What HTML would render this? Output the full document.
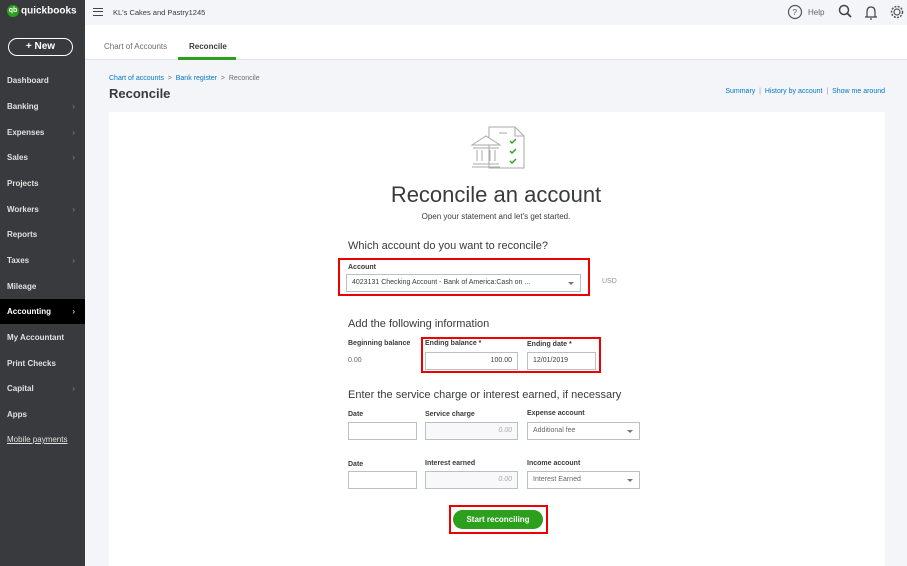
<!DOCTYPE html>
<html><head><meta charset="utf-8"><style>
*{box-sizing:border-box;margin:0;padding:0}
html,body{width:907px;height:566px;overflow:hidden}
body{font-family:"Liberation Sans",sans-serif;background:#f4f5f8;position:relative;color:#393a3d}
.sb{position:absolute;left:0;top:0;width:85px;height:566px;background:#393a3d;color:#fff}
.logo{position:absolute;left:7px;top:5px;font-weight:bold;font-size:10px;color:#fff}
.logo .c{display:inline-block;width:12px;height:12px;border-radius:50%;background:#2ca01c;vertical-align:middle;margin-right:2px;font-size:7px;text-align:center;line-height:12px}
.new{position:absolute;left:8px;top:38px;width:65px;height:18px;border:1.5px solid #fff;border-radius:10px;font-size:10px;font-weight:bold;text-align:center;line-height:15px}
.nav{position:absolute;left:0;width:85px;height:25px;font-size:8px;font-weight:bold;padding-left:7px;line-height:25px;color:#e0e0e0}
.nav .a{position:absolute;right:10px;color:#888;font-weight:normal}
.top{position:absolute;left:85px;top:0;right:0;height:25px;background:#f4f5f8;font-size:7.5px}
.tabs{position:absolute;left:85px;top:25px;right:0;height:35px;background:#fff;border-bottom:1px solid #e3e5e8}
.tab{position:absolute;top:17px;font-size:8px;color:#6b6c72}
.link{color:#0077c5}
.card{position:absolute;left:109px;top:112px;width:776px;height:454px;background:#fff}
.lbl{position:absolute;font-size:7px;font-weight:bold;color:#393a3d}
.inp{position:absolute;height:18px;border:1px solid #babec5;background:#fff;font-size:7px;line-height:16px;padding:0 5px;color:#393a3d}
.red{position:absolute;border:2px solid #e00}
.h{position:absolute;font-size:11px;color:#393a3d}
.dd::after{content:"";position:absolute;right:6px;top:7px;border:3px solid transparent;border-top:3px solid #777}
</style></head><body>
<div class="sb">
<div class="logo"><span class="c">qb</span>quickbooks</div>
<div class="new">+ New</div>
<div class="nav" style="top:68px">Dashboard</div>
<div class="nav" style="top:94px">Banking<span class="a">›</span></div>
<div class="nav" style="top:120px">Expenses<span class="a">›</span></div>
<div class="nav" style="top:145px">Sales<span class="a">›</span></div>
<div class="nav" style="top:171px">Projects</div>
<div class="nav" style="top:197px">Workers<span class="a">›</span></div>
<div class="nav" style="top:222px">Reports</div>
<div class="nav" style="top:248px">Taxes<span class="a">›</span></div>
<div class="nav" style="top:274px">Mileage</div>
<div class="nav" style="top:299px;background:#000;color:#fff">Accounting<span class="a" style="color:#fff">›</span></div>
<div class="nav" style="top:325px">My Accountant</div>
<div class="nav" style="top:351px">Print Checks</div>
<div class="nav" style="top:376px">Capital<span class="a">›</span></div>
<div class="nav" style="top:402px">Apps</div>
<div class="nav" style="top:427px;font-weight:normal;text-decoration:underline">Mobile payments</div>
</div>
<div class="top">
<div style="position:absolute;left:8px;top:8px;width:10px;height:8px;border-top:1.5px solid #444;border-bottom:1.5px solid #444"><div style="margin-top:2px;border-top:1.5px solid #444"></div></div>
<div style="position:absolute;left:28px;top:8px">KL's Cakes and Pastry1245</div>
<svg style="position:absolute;left:702px;top:4px" width="120" height="17"><circle cx="8" cy="8" r="6.5" fill="none" stroke="#555" stroke-width="1.2"/><text x="5.5" y="11" font-size="8" fill="#555" font-family="Liberation Sans">?</text><text x="21" y="11" font-size="8" fill="#666" font-family="Liberation Sans">Help</text><circle cx="57" cy="6" r="4.5" fill="none" stroke="#444" stroke-width="1.5"/><line x1="60" y1="9" x2="64" y2="13" stroke="#444" stroke-width="1.8"/><path d="M80 13 L80 8 Q80 3 84 3 Q88 3 88 8 L88 13 Z M78 13 L90 13 M83 15 L85 15" fill="none" stroke="#444" stroke-width="1.2"/><circle cx="110" cy="8" r="3" fill="none" stroke="#555" stroke-width="1.2"/><circle cx="110" cy="8" r="5.5" fill="none" stroke="#555" stroke-width="1.5" stroke-dasharray="2 1.3"/></svg>
</div>
<div class="tabs">
<div class="tab" style="left:19px">Chart of Accounts</div>
<div class="tab" style="left:104px;color:#393a3d;font-weight:bold">Reconcile</div>
<div style="position:absolute;left:93px;top:32px;width:58px;height:3px;background:#2ca01c"></div>
</div>
<div style="position:absolute;left:109px;top:75px;font-size:7px;color:#6b6c72"><span class="link">Chart of accounts</span> &nbsp;&gt;&nbsp; <span class="link">Bank register</span> &nbsp;&gt;&nbsp; Reconcile</div>
<div style="position:absolute;left:109px;top:86px;font-size:13px;font-weight:bold">Reconcile</div>
<div style="position:absolute;right:22px;top:88px;font-size:7px;color:#0077c5">Summary &nbsp;<span style="color:#999">|</span>&nbsp; History by account &nbsp;<span style="color:#999">|</span>&nbsp; Show me around</div>
<div class="card"></div>
<svg style="position:absolute;left:470px;top:123px" width="56" height="48" fill="none" stroke="#aaa" stroke-width="1"><path d="M19 4 L45 4 L54 13 L54 45 L19 45 Z M45 4 L45 13 L54 13 M29 10 L37 10"/><path d="M2 22 L16 13 L30 22 Z M3 25 L29 25 M3 41 L29 41 M2 44 L30 44 M7 27 L7 38 M12 27 L12 38 M20 27 L20 38 M25 27 L25 38" fill="#fff"/><path d="M40 18 l2 2 l4 -4 M40 28 l2 2 l4 -4 M40 38 l2 2 l4 -4" stroke="#2ca01c" stroke-width="1.4"/></svg>
<div style="position:absolute;left:85px;width:822px;top:182px;text-align:center;font-size:22px;color:#393a3d">Reconcile an account</div>
<div style="position:absolute;left:85px;width:822px;top:212px;text-align:center;font-size:8px">Open your statement and let's get started.</div>
<div class="h" style="left:348px;top:240px">Which account do you want to reconcile?</div>
<div class="red" style="left:338px;top:258px;width:252px;height:38px"></div>
<div class="lbl" style="left:348px;top:264px">Account</div>
<div class="inp dd" style="left:346px;top:274px;width:235px">4023131 Checking Account - Bank of America:Cash on ...</div>
<div style="position:absolute;left:602px;top:278px;font-size:7px;color:#8d9096">USD</div>
<div class="h" style="left:348px;top:318px">Add the following information</div>
<div class="lbl" style="left:348px;top:340px">Beginning balance</div>
<div style="position:absolute;left:348px;top:357px;font-size:7px;color:#666">0.00</div>
<div class="red" style="left:421px;top:337px;width:180px;height:36px"></div>
<div class="lbl" style="left:425px;top:340px">Ending balance *</div>
<div class="inp" style="left:425px;top:352px;width:93px;text-align:right">100.00</div>
<div class="lbl" style="left:527px;top:341px">Ending date *</div>
<div class="inp" style="left:527px;top:352px;width:69px">12/01/2019</div>
<div class="h" style="left:348px;top:389px">Enter the service charge or interest earned, if necessary</div>
<div class="lbl" style="left:348px;top:411px">Date</div>
<div class="lbl" style="left:425px;top:411px">Service charge</div>
<div class="lbl" style="left:527px;top:410px">Expense account</div>
<div class="inp" style="left:348px;top:422px;width:69px"></div>
<div class="inp" style="left:425px;top:422px;width:93px;text-align:right;color:#aaa;font-style:italic;background:#f8f8fa">0.00</div>
<div class="inp dd" style="left:527px;top:422px;width:113px;color:#666">Additional fee</div>
<div class="lbl" style="left:348px;top:461px">Date</div>
<div class="lbl" style="left:425px;top:460px">Interest earned</div>
<div class="lbl" style="left:527px;top:460px">Income account</div>
<div class="inp" style="left:348px;top:471px;width:69px"></div>
<div class="inp" style="left:425px;top:471px;width:93px;text-align:right;color:#aaa;font-style:italic;background:#f8f8fa">0.00</div>
<div class="inp dd" style="left:527px;top:471px;width:113px;color:#666">Interest Earned</div>
<div class="red" style="left:449px;top:505px;width:99px;height:29px"></div>
<div style="position:absolute;left:453px;top:510px;width:90px;height:19px;border-radius:10px;background:#2ca01c;color:#fff;font-size:8px;font-weight:bold;text-align:center;line-height:19px">Start reconciling</div>
</body></html>
